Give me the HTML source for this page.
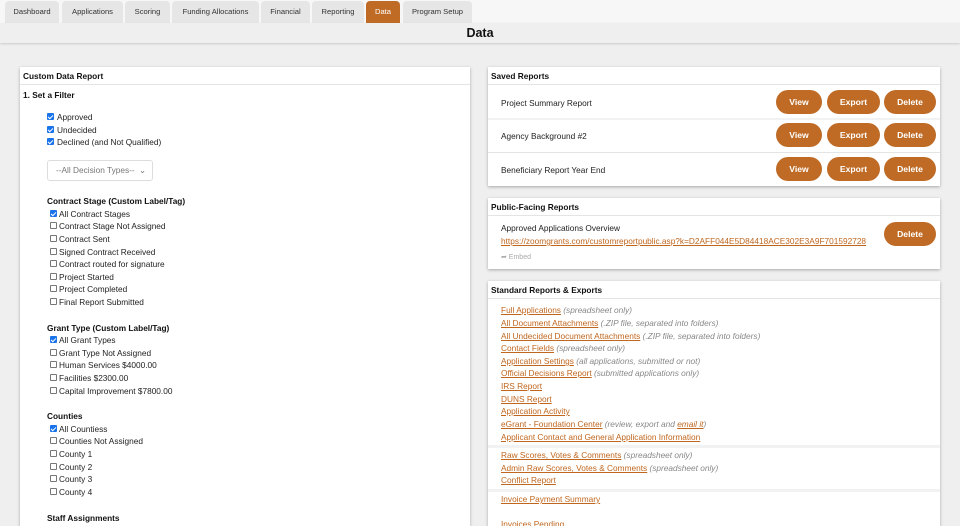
<!DOCTYPE html>
<html><head><meta charset="utf-8"><style>
*{margin:0;padding:0;box-sizing:border-box}
html,body{width:960px;height:526px;overflow:hidden}
body{background:#efefef;font-family:"Liberation Sans",Arial,sans-serif;font-size:8.3px;color:#222;position:relative}
.a{position:absolute;white-space:nowrap}
.topbar{position:absolute;left:0;top:0;width:960px;height:23px;background:#f7f7f7}
.tab{position:absolute;top:1px;height:22px;background:#e6e6e6;border-radius:4px 4px 0 0;font-size:7.6px;color:#333;text-align:center;line-height:22px}
.tab.on{background:#bf6b25;color:#fff}
.titlebar{position:absolute;left:0;top:23px;width:960px;height:20px;background:#efefef;box-shadow:0 1px 2px rgba(0,0,0,.15);text-align:center;font-weight:bold;font-size:12.5px;line-height:20px;color:#111}
.panel{position:absolute;background:#fff;box-shadow:0 1px 3px rgba(0,0,0,.3)}
.ph{position:absolute;left:0;right:0;top:0;height:18px;border-bottom:1px solid #e4e4e4;font-weight:bold;padding-left:3px;line-height:18px;font-size:8.3px;color:#111}
.btn{position:absolute;height:24px;background:#bf6b25;color:#fff;border-radius:12px;font-weight:bold;text-align:center;line-height:24px;font-size:8.6px}
.cb{position:absolute;width:7px;height:7px;border:1px solid #777;border-radius:1px;background:#fff;margin-top:1px}
.cb.c{background:#1a73e8;border-color:#1a73e8}
.cb.c:after{content:"";position:absolute;left:1px;top:0px;width:2px;height:4px;border:solid #fff;border-width:0 1.3px 1.3px 0;transform:rotate(45deg)}
.h{font-weight:bold;color:#111}
.lk{color:#c0661e;text-decoration:underline}
.it{color:#888;font-style:italic}
.sep{position:absolute;left:0;right:0;height:3px;background:#f2f2f2}
</style></head><body>
<div class="topbar"></div>
<div class="tab" style="left:5px;width:54px">Dashboard</div>
<div class="tab" style="left:62px;width:61px">Applications</div>
<div class="tab" style="left:125px;width:45px">Scoring</div>
<div class="tab" style="left:172px;width:87px">Funding Allocations</div>
<div class="tab" style="left:261px;width:49px">Financial</div>
<div class="tab" style="left:312px;width:52px">Reporting</div>
<div class="tab on" style="left:366px;width:34px">Data</div>
<div class="tab" style="left:403px;width:69px">Program Setup</div>
<div class="titlebar">Data</div>

<div class="panel" style="left:20px;top:67px;width:450px;height:459px;overflow:hidden">
<div class="ph">Custom Data Report</div>
<div class="a h" style="left:3px;top:23px">1. Set a Filter</div>
<div class="cb c" style="left:27px;top:45px"></div><div class="a" style="left:37px;top:45px">Approved</div>
<div class="cb c" style="left:27px;top:58px"></div><div class="a" style="left:37px;top:58px">Undecided</div>
<div class="cb c" style="left:27px;top:70px"></div><div class="a" style="left:37px;top:70px">Declined (and Not Qualified)</div>
<div class="a" style="left:27px;top:93px;width:106px;height:21px;border:1px solid #ddd;border-radius:3px;color:#777;line-height:19px;padding-left:8px">--All Decision Types--<span style="position:absolute;right:6px;top:0">&#x2304;</span></div>
<div class="a h" style="left:27px;top:129px">Contract Stage (Custom Label/Tag)</div>
<div class="cb c" style="left:30px;top:142px"></div><div class="a" style="left:39px;top:142px">All Contract Stages</div>
<div class="cb" style="left:30px;top:154px"></div><div class="a" style="left:39px;top:154px">Contract Stage Not Assigned</div>
<div class="cb" style="left:30px;top:167px"></div><div class="a" style="left:39px;top:167px">Contract Sent</div>
<div class="cb" style="left:30px;top:180px"></div><div class="a" style="left:39px;top:180px">Signed Contract Received</div>
<div class="cb" style="left:30px;top:192px"></div><div class="a" style="left:39px;top:192px">Contract routed for signature</div>
<div class="cb" style="left:30px;top:205px"></div><div class="a" style="left:39px;top:205px">Project Started</div>
<div class="cb" style="left:30px;top:217px"></div><div class="a" style="left:39px;top:217px">Project Completed</div>
<div class="cb" style="left:30px;top:230px"></div><div class="a" style="left:39px;top:230px">Final Report Submitted</div>
<div class="a h" style="left:27px;top:256px">Grant Type (Custom Label/Tag)</div>
<div class="cb c" style="left:30px;top:268px"></div><div class="a" style="left:39px;top:268px">All Grant Types</div>
<div class="cb" style="left:30px;top:281px"></div><div class="a" style="left:39px;top:281px">Grant Type Not Assigned</div>
<div class="cb" style="left:30px;top:293px"></div><div class="a" style="left:39px;top:293px">Human Services $4000.00</div>
<div class="cb" style="left:30px;top:306px"></div><div class="a" style="left:39px;top:306px">Facilities $2300.00</div>
<div class="cb" style="left:30px;top:319px"></div><div class="a" style="left:39px;top:319px">Capital Improvement $7800.00</div>
<div class="a h" style="left:27px;top:344px">Counties</div>
<div class="cb c" style="left:30px;top:357px"></div><div class="a" style="left:39px;top:357px">All Countiess</div>
<div class="cb" style="left:30px;top:369px"></div><div class="a" style="left:39px;top:369px">Counties Not Assigned</div>
<div class="cb" style="left:30px;top:382px"></div><div class="a" style="left:39px;top:382px">County 1</div>
<div class="cb" style="left:30px;top:395px"></div><div class="a" style="left:39px;top:395px">County 2</div>
<div class="cb" style="left:30px;top:407px"></div><div class="a" style="left:39px;top:407px">County 3</div>
<div class="cb" style="left:30px;top:420px"></div><div class="a" style="left:39px;top:420px">County 4</div>
<div class="a h" style="left:27px;top:446px">Staff Assignments</div>
<div class="cb c" style="left:30px;top:458px"></div>
</div>

<div class="panel" style="left:488px;top:67px;width:452px;height:119px">
<div class="ph">Saved Reports</div>
<div class="a" style="left:13px;top:31px">Project Summary Report</div>
<div class="btn" style="left:288px;top:23px;width:46px">View</div><div class="btn" style="left:339px;top:23px;width:53px">Export</div><div class="btn" style="left:396px;top:23px;width:52px">Delete</div>
<div class="sep" style="top:51px;height:2px"></div>
<div class="a" style="left:13px;top:64px">Agency Background #2</div>
<div class="btn" style="left:288px;top:56px;width:46px">View</div><div class="btn" style="left:339px;top:56px;width:53px">Export</div><div class="btn" style="left:396px;top:56px;width:52px">Delete</div>
<div class="sep" style="top:85px;height:1px;background:#e4e4e4"></div>
<div class="a" style="left:13px;top:98px">Beneficiary Report Year End</div>
<div class="btn" style="left:288px;top:90px;width:46px">View</div><div class="btn" style="left:339px;top:90px;width:53px">Export</div><div class="btn" style="left:396px;top:90px;width:52px">Delete</div>
</div>

<div class="panel" style="left:488px;top:198px;width:452px;height:71px">
<div class="ph">Public-Facing Reports</div>
<div class="a" style="left:13px;top:25px">Approved Applications Overview</div>
<div class="a lk" style="left:13px;top:38px">https://zoomgrants.com/customreportpublic.asp?k=D2AFF044E5D84418ACE302E3A9F701592728</div>
<div class="a" style="left:13px;top:55px;color:#aaa;font-size:7px">&#x27A6; Embed</div>
<div class="btn" style="left:396px;top:24px;width:52px">Delete</div>
</div>

<div class="panel" style="left:488px;top:281px;width:452px;height:245px;overflow:hidden">
<div class="ph">Standard Reports &amp; Exports</div>
<div class="a" style="left:13px;top:24px"><span class="lk">Full Applications</span> <span class="it">(spreadsheet only)</span></div>
<div class="a" style="left:13px;top:37px"><span class="lk">All Document Attachments</span> <span class="it">(.ZIP file, separated into folders)</span></div>
<div class="a" style="left:13px;top:50px"><span class="lk">All Undecided Document Attachments</span> <span class="it">(.ZIP file, separated into folders)</span></div>
<div class="a" style="left:13px;top:62px"><span class="lk">Contact Fields</span> <span class="it">(spreadsheet only)</span></div>
<div class="a" style="left:13px;top:75px"><span class="lk">Application Settings</span> <span class="it">(all applications, submitted or not)</span></div>
<div class="a" style="left:13px;top:87px"><span class="lk">Official Decisions Report</span> <span class="it">(submitted applications only)</span></div>
<div class="a" style="left:13px;top:100px"><span class="lk">IRS Report</span></div>
<div class="a" style="left:13px;top:113px"><span class="lk">DUNS Report</span></div>
<div class="a" style="left:13px;top:125px"><span class="lk">Application Activity</span></div>
<div class="a" style="left:13px;top:138px"><span class="lk">eGrant - Foundation Center</span> <span class="it">(review, export and <span class="lk">email it</span>)</span></div>
<div class="a" style="left:13px;top:151px"><span class="lk">Applicant Contact and General Application Information</span></div>
<div class="sep" style="top:164px"></div>
<div class="a" style="left:13px;top:169px"><span class="lk">Raw Scores, Votes &amp; Comments</span> <span class="it">(spreadsheet only)</span></div>
<div class="a" style="left:13px;top:182px"><span class="lk">Admin Raw Scores, Votes &amp; Comments</span> <span class="it">(spreadsheet only)</span></div>
<div class="a" style="left:13px;top:194px"><span class="lk">Conflict Report</span></div>
<div class="sep" style="top:208px"></div>
<div class="a" style="left:13px;top:213px"><span class="lk">Invoice Payment Summary</span></div>
<div class="a" style="left:13px;top:238px"><span class="lk">Invoices Pending</span></div>
</div>
</body></html>
